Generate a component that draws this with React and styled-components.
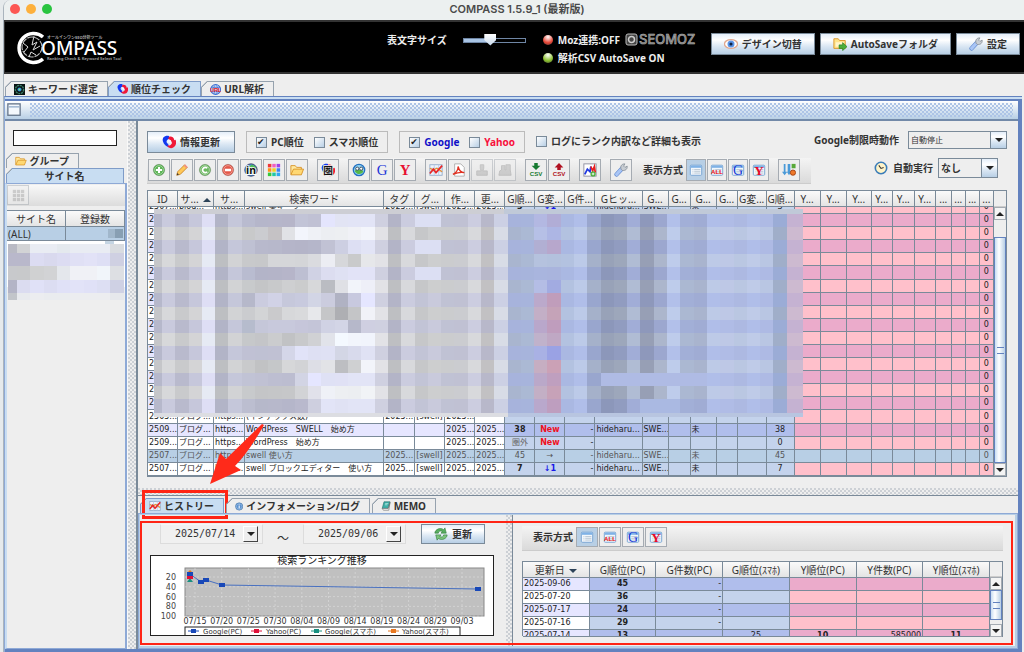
import { useState } from "react";
import styled, { createGlobalStyle, css } from "styled-components";

const GlobalStyle = createGlobalStyle`
  * {
    box-sizing: border-box;
  }

  body {
    margin: 0;
    background: #e6eaec;
    color: #333;
    font-family: "Noto Sans", "Noto Sans CJK JP", sans-serif;
    font-size: 10px;
    line-height: 14px;
    overflow: hidden;
  }

  button,
  input,
  select {
    font: inherit;
    color: inherit;
    margin: 0;
    border-radius: 0;
  }
`;

const line = "#7a8a99";
const blue = "#6382bf";
const metal = "linear-gradient(#e4eef9, #fff 30%, #dce8f4 60%, #b8cfe5)";

const dots = css`
  background-image: radial-gradient(circle at 1px 1px, #ccd0d5 1px, transparent 1px),
    radial-gradient(circle at 3px 3px, #ccd0d5 1px, transparent 1px);
  background-size: 4px 4px;
`;

const Window = styled.div`
  display: flex;
  flex-direction: column;
  min-height: 100vh;
  margin-left: 3px;
  border-left: 1px solid #aab4bd;
  border-top-left-radius: 8px;
  background: #eee;
  overflow: hidden;
`;

const TitleBar = styled.header`
  position: relative;
  display: flex;
  align-items: center;
  justify-content: center;
  height: 20px;
  padding: 0 0 2px 6px;
  background: #ecf0f0;
  font-family: Inter, "Noto Sans CJK JP", sans-serif;
  font-size: 11px;
  font-weight: 600;
  color: #4a4a4a;
`;

const Lights = styled.div`
  position: absolute;
  left: 6px;
  top: 4px;
  display: flex;
  gap: 6px;
`;

const Light = styled.span`
  width: 10px;
  height: 10px;
  border-radius: 50%;
  background: ${(p) => p.$color};
`;

const Banner = styled.div`
  display: flex;
  align-items: flex-start;
  height: 54px;
  padding: 9px 4px 0 10px;
  border: solid #333;
  border-width: 2px 0 2px 1px;
  background: #000;
  color: #eee;
  font-weight: 700;
`;

const SizeLabel = styled.label`
  display: flex;
  align-items: center;
  gap: 16px;
  margin-left: 265px;
  height: 18px;
`;

const Range = styled.input`
  appearance: none;
  width: 63px;
  height: 14px;
  background: none;

  &::-webkit-slider-runnable-track {
    height: 5px;
    border: 1px solid #6f86a5;
    background: linear-gradient(90deg, #a9c4e4 42%, #000 42%);
  }

  &::-webkit-slider-thumb {
    appearance: none;
    width: 12px;
    height: 12px;
    margin-top: -5px;
    background: linear-gradient(#fff, #c5d8ec);
    clip-path: polygon(0 0, 100% 0, 100% 55%, 50% 100%, 0 55%);
  }
`;

const Status = styled.div`
  display: grid;
  gap: 4px;
  margin-left: 17px;
  padding-top: 2px;
`;

const StatusLine = styled.div`
  display: flex;
  align-items: center;
  gap: 5px;
`;

const Lamp = styled.span`
  width: 10px;
  height: 10px;
  border-radius: 50%;
  background: radial-gradient(circle at 50% 20%, #fff, ${(p) => p.$color} 60%, #333 110%);
`;

const BannerButtons = styled.div`
  display: flex;
  gap: 5px;
  margin-left: auto;
  padding-top: 2px;
`;

const MetalButton = styled.button`
  display: flex;
  align-items: center;
  justify-content: center;
  gap: 4px;
  height: ${(p) => p.$height || 22}px;
  padding: 0 ${(p) => p.$pad || 14}px;
  border: 1px solid ${line};
  background: ${metal};
  color: #333;
  font-weight: 700;
  white-space: nowrap;
`;

const Tabs = styled.div`
  display: flex;
  align-items: flex-end;
  gap: ${(p) => p.$gap || 0}px;
  padding-left: ${(p) => p.$indent || 1}px;
  height: ${(p) => p.$height || 15}px;
`;

const TabSlot = styled.div`
  position: relative;
  display: flex;
`;

const Tab = styled.button`
  display: flex;
  align-items: center;
  justify-content: center;
  gap: 3px;
  width: ${(p) => (p.$width ? p.$width + "px" : "auto")};
  height: 15px;
  padding: 0 9px 0 8px;
  border: 1px solid ${(p) => (p.$active ? "#7f9cc8" : "#96a2ae")};
  border-bottom: 0;
  background: linear-gradient(
    135deg,
    #96a2ae 5px,
    ${(p) => (p.$active ? "#c8ddf2" : "#eee")} 5px
  );
  background-origin: border-box;
  clip-path: polygon(6px 0, 100% 0, 100% 100%, 0 100%, 0 6px);
  color: #333;
  font-weight: 700;
  white-space: nowrap;
`;

const Frame = styled.section`
  flex: 1;
  display: flex;
  flex-direction: column;
  margin-right: 2px;
  padding-top: 2px;
  border-top: 1px solid ${blue};
  border-left: 1px solid #8ea9d6;
  background: #c8ddf2;
`;

const Inner = styled.div`
  flex: 1;
  display: flex;
  flex-direction: column;
  border: solid ${blue};
  border-width: 2px 4px 3px 0;
  background: #eee;
`;

const InnerBar = styled.div`
  display: flex;
  align-items: center;
  gap: 9px;
  height: 20px;
  padding: 0 5px 0 2px;
  border-bottom: 2px solid #7289a8;
  background: linear-gradient(#fff, #b8cfe5);
`;

const InnerGrip = styled.div`
  flex: 1;
  height: 14px;
  background-image: radial-gradient(circle at 1px 1px, #adc4e6 1px, transparent 1px),
    radial-gradient(circle at 3px 3px, #adc4e6 1px, transparent 1px);
  background-size: 4px 4px;
`;

const Columns = styled.div`
  flex: 1;
  display: grid;
  grid-template-columns: 123px 8px minmax(0, 1fr);
`;

const Grip = styled.div`
  ${dots}
  background-color: #eee;
`;

const Sidebar = styled.aside`
  display: flex;
  flex-direction: column;
  border-right: 1px solid #f8f8f8;
`;

const Search = styled.input`
  height: 16px;
  margin: 9px 10px 7px 8px;
  padding: 0 3px;
  border: 1px solid #222;
  background: #fff;
`;

const SidePanel = styled.div`
  flex: 1;
  border: solid #8ea9d6;
  border-width: 1px 2px;
  border-left-color: #c8ddf2;
`;

const SideTools = styled.div`
  height: 21px;
  margin: 1px 0 4px;
  background: linear-gradient(#f8f8f8, #dcdcdc);
`;

const Main = styled.main`
  position: relative;
  display: flex;
  flex-direction: column;
  border-left: 2px solid ${line};
`;

const Upper = styled.div`
  flex: 1;
  display: flex;
  flex-direction: column;
  padding: 10px 11px 11px 9px;
`;

const Options = styled.div`
  display: flex;
  align-items: flex-start;
  height: 27px;
`;

const Group = styled.div`
  display: flex;
  align-items: center;
  gap: 10px;
  height: 22px;
  margin-left: ${(p) => p.$gap || 11}px;
  padding: 0 9px;
  border: 1px solid #bbb;
`;

const CheckLabel = styled.label`
  display: flex;
  align-items: center;
  gap: 4px;
  margin-left: ${(p) => p.$gap || 0}px;
  height: 20px;
  color: ${(p) => p.$color || "#333"};
  font-weight: 700;
  white-space: nowrap;
`;

const Check = styled.input`
  appearance: none;
  width: 11px;
  height: 11px;
  border: 1px solid ${line};
  background: linear-gradient(135deg, #fff, #b8cfe5);

  &:checked::after {
    content: "✔";
    display: block;
    font: 9px/9px "DejaVu Sans", sans-serif;
    color: #222;
  }
`;

const Field = styled.label`
  display: flex;
  align-items: center;
  gap: ${(p) => p.$gap || 5}px;
  margin-left: auto;
  margin-right: ${(p) => p.$right || 0}px;
  font-weight: 700;
  white-space: nowrap;
`;

const Combo = styled.span`
  display: grid;
  grid-template-columns: 1fr 16px;
  width: ${(p) => p.$width}px;
  height: ${(p) => p.$height}px;
  border: 1px solid ${line};
`;

const Select = styled.select`
  appearance: none;
  padding: 0 2px;
  border: 0;
  background: #eee;
  font-size: ${(p) => p.$size || 10}px;
  font-weight: ${(p) => p.$weight || 400};
`;

const Down = styled.span`
  display: grid;
  place-items: center;
  border-left: 1px solid ${line};
  background: ${metal};

  &::after {
    content: "";
    border: 4px solid transparent;
    border-top-color: #222;
    border-bottom: 0;
  }
`;

const ToolLine = styled.div`
  display: flex;
  align-items: flex-start;
  height: 32px;
`;

const Tools = styled.div`
  display: flex;
  align-items: center;
  height: 26px;
  padding: 0 11px 2px 1px;
  background: linear-gradient(#f4f4f4, #dadada);
  border-bottom: 1px solid #ccc;
`;

const ToolGroup = styled.div`
  display: flex;
  gap: 1px;
  margin-right: 9px;

  &:last-child {
    margin-right: 0;
  }
`;

const ToolButton = styled.button`
  display: grid;
  place-items: center;
  width: ${(p) => p.$width || 22}px;
  height: ${(p) => p.$height || 22}px;
  padding: 0;
  border: 1px solid #a5abb2;
  background: ${(p) => (p.$active ? "#b8cfe5" : "#eee")};
  opacity: ${(p) => (p.disabled ? 0.5 : 1)};
`;

const ToolText = styled.span`
  margin: 0 3px 0 2px;
  font-weight: 700;
  white-space: nowrap;
`;

const TableBox = styled.div`
  position: relative;
  flex: ${(p) => (p.$height ? "none" : 1)};
  height: ${(p) => (p.$height ? p.$height + "px" : "auto")};
  display: grid;
  grid-template-columns: minmax(0, 1fr) 13px;
  border: solid ${line};
  border-width: 1px 0 1px 1px;
`;

const Table = styled.table`
  width: 100%;
  height: 100%;
  table-layout: fixed;
  border-spacing: 0;
`;

const Th = styled.th`
  height: 16px;
  padding: 0;
  border-right: 1px solid ${line};
  border-bottom: 1px solid ${line};
  background: linear-gradient(#fafafa, #e4e4e4);
  font-weight: 400;
  line-height: 14px;
  white-space: nowrap;
  overflow: hidden;
`;

const Td = styled.td`
  height: ${(p) => (p.$cut ? 7 : 13)}px;
  padding: 0 1px;
  border-right: 1px solid ${line};
  border-bottom: 1px solid ${line};
  background: ${(p) => p.$bg};
  color: ${(p) => p.$color || "#222"};
  font-family: "DejaVu Sans", "Noto Sans CJK JP", sans-serif;
  font-size: 8px;
  font-weight: ${(p) => (p.$bold ? 700 : 400)};
  line-height: 12px;
  text-align: ${(p) => p.$align || "left"};
  white-space: nowrap;
  overflow: hidden;
`;

// keeps a half scrolled row at its visible height
const Cut = styled.div`
  display: flex;
  flex-direction: column;
  justify-content: ${(p) => (p.$top ? "flex-start" : "flex-end")};
  height: 6px;
  overflow: hidden;
`;

const Scroll = styled.div`
  display: grid;
  grid-template-rows: ${(p) => p.$rows};
  border-right: 1px solid ${line};
  background: #eee;
`;

const ScrollHead = styled.div`
  border-bottom: 1px solid #ccc;
`;

const ScrollButton = styled.button`
  display: grid;
  place-items: center;
  padding: 0;
  border: 1px solid #a5abb2;
  background: #f4f4f4;

  &::after {
    content: "";
    border: 4px solid transparent;
    ${(p) =>
      p.$up
        ? "border-bottom-color: #222; border-top: 0;"
        : "border-top-color: #222; border-bottom: 0;"}
  }
`;

const Thumb = styled.div`
  display: grid;
  place-items: center;
  border: 1px solid ${blue};
  background: linear-gradient(90deg, #c8ddf2, #fff 40%, #b8cfe5);

  &::after {
    content: "";
    width: 7px;
    height: 5px;
    border: solid ${blue};
    border-width: 1px 0;
  }
`;

const Mosaic = styled.svg`
  position: absolute;
  left: 6px;
  top: 18px;
  width: 75.5%;
  height: 208px;
`;

const SideMosaic = styled.svg`
  display: block;
  width: 100%;
  height: 59px;
`;

const Splitter = styled.div`
  ${dots}
  height: 8px;
  border-bottom: 1px solid ${line};
`;

const Lower = styled.div`
  position: relative;
  display: flex;
  flex-direction: column;
  height: 153px;
`;

const LowerPanel = styled.div`
  position: relative;
  flex: 1;
  display: grid;
  grid-template-columns: 366px 6px minmax(0, 1fr);
  border: solid #b8cfe5;
  border-width: 2px 3px 3px 2px;
  outline: 1px solid #8ea9d6;
  outline-offset: -1px;
`;

const Mark = styled.div`
  position: absolute;
  inset: ${(p) => p.$inset};
  border: ${(p) => p.$width}px solid #ff2415;
  pointer-events: none;
`;

const Arrow = styled.svg`
  position: absolute;
  left: 71px;
  bottom: 162px;
  width: 60px;
  height: 64px;
  pointer-events: none;
`;

const History = styled.div`
  padding: 9px 8px 0 10px;
`;

const Dates = styled.div`
  display: flex;
  align-items: center;
  height: 20px;
  margin: 0 0 11px 10px;
`;

const DateCombo = styled.span`
  display: grid;
  grid-template-columns: 1fr 15px;
  width: 103px;
  height: 20px;
  padding: 1px 4px 1px 14px;
  border: 1px solid #dcdcdc;
  border-top-color: #f6f6f6;
  background: #f0f0f0;
`;

const DateSelect = styled.select`
  appearance: none;
  padding: 0;
  border: 0;
  background: none;
  font-family: "DejaVu Sans Mono", monospace;
`;

const DateDown = styled(Down)`
  border: 1px solid #fff;
  border-right-color: #444;
  border-bottom-color: #444;
  background: #eee;
`;

const Tilde = styled.span`
  width: 40px;
  padding-top: 10px;
  text-align: center;
  font-size: 12px;
`;

const Chart = styled.svg`
  display: block;
  width: 344px;
  max-width: 100%;
  height: 81px;
  border: 1px solid #222;
  background: #fff;
  font-family: "DejaVu Sans", "Noto Sans CJK JP", sans-serif;
`;

const Results = styled.div`
  padding: 11px 12px 0 9px;
  border-left: 1px solid ${line};
`;

const ResultTools = styled(Tools)`
  height: 25px;
  margin-bottom: 10px;
  padding-left: 9px;
`;

// ---- icons ----

const Svg = ({ size = 14, children }) => (
  <svg width={size} height={size} viewBox="0 0 16 16" aria-hidden="true">
    {children}
  </svg>
);

const Swirl = () => (
  <>
    <path d="M8 1C3 0 0 3 1 7c1 4 4 6 7 7l-1-4C5 9 4 6 8 4.500z" fill="#1238f0" />
    <path d="M8 2c3-1 6 1 6 4l1.500-.5c2 5-1 9.500-5 9.500-2 0-4-1-4.500-3 3 .5 5-1 5-3 0-2.500-2-4-4-4.500z" fill="#f01838" />
    <path d="M6.500 5l3.500 1 1.500 4-4-1.500z" fill="#f4f4ff" />
  </>
);

const Ball = ({ color, children }) => (
  <>
    <circle cx="8" cy="8" r="6.500" fill={color} stroke="#0003" />
    <circle cx="8" cy="8" r="5" fill="none" stroke="#fff8" strokeWidth=".8" />
    {children}
  </>
);

const Folder = () => (
  <>
    <path d="M1 13V3h5l1.500 2H13v2" fill="#ffe9a0" stroke="#d89020" />
    <path d="M1 13.500L4 7h11.500L13 13.500z" fill="#ffd873" stroke="#d89020" />
  </>
);

const Sheet = () => (
  <>
    <rect x="1.500" y="2.500" width="13" height="11.500" rx="1" fill="#f2f7fc" stroke="#6f9fd0" />
    <rect x="2" y="3" width="12" height="2.500" fill="#7fb2e6" />
    <path d="M4 7.500h1M4 9.500h1M4 11.500h1M6 7.500h7M6 9.500h7M6 11.500h7" stroke="#a4b4c4" strokeWidth=".8" />
  </>
);

const Letter = ({ x = 8, y = 13, size = 13, weight = 700, color, children, family = "Liberation Serif" }) => (
  <text x={x} y={y} fontSize={size} fontWeight={weight} fill={color} textAnchor="middle" fontFamily={family}>
    {children}
  </text>
);

const icons = {
  swirl: <Swirl />,
  target: (
    <>
      <rect width="16" height="16" fill="#0a1414" />
      <circle cx="8" cy="8" r="6" fill="none" stroke="#3b8068" strokeWidth="2" strokeDasharray="3 1" />
      <circle cx="8" cy="8" r="3" fill="#2a8ad0" />
      <circle cx="8" cy="8" r="1.500" fill="#7fe090" />
    </>
  ),
  url: (
    <>
      <circle cx="8" cy="8" r="7" fill="#c5d8f6" stroke="#3d6fd0" strokeWidth="1.500" />
      <path d="M2 5h12M2 11h12M8 1c-4 4-4 10 0 14 4-4 4-10 0-14" fill="none" stroke="#3d6fd0" />
      <Letter y={11} size={8} color="#f01818" family="Liberation Sans">URL</Letter>
    </>
  ),
  frame: (
    <>
      <rect x="1" y="1" width="14" height="13" fill="#f4f8fc" stroke="#65758a" strokeWidth="1.500" />
      <path d="M2 4.500h12" stroke="#8ea9c8" strokeWidth="1.500" />
    </>
  ),
  eye: (
    <>
      <ellipse cx="8" cy="8" rx="7.500" ry="5" fill="#fff" stroke="#e0a890" strokeWidth="1.500" />
      <circle cx="8" cy="8" r="4" fill="#5a94e8" />
      <circle cx="8" cy="8" r="1.800" fill="#102040" />
    </>
  ),
  folder: <Folder />,
  folderGo: (
    <>
      <path d="M1 13V2h5l1.500 2H14v9z" fill="#ffe48c" stroke="#d89020" />
      <path d="M3 6h9v5H3z" fill="#fff5cc" />
      <path d="M7 9h4V6.500l5 4.500-5 4.500V13H7z" fill="#4cae3c" stroke="#26801e" strokeWidth=".8" />
    </>
  ),
  wrench: (
    <>
      <path d="M3 13L9 6.500" stroke="#5a84cc" strokeWidth="5" strokeLinecap="round" />
      <path d="M3 13L9 6.500" stroke="#a9c5f5" strokeWidth="3.600" strokeLinecap="round" />
      <path d="M8 7C7 3 9 1 12.500 1L11 3.500 12.500 5 15 3.500C15.500 7 13 9 9.500 8.500z" fill="#c9ced4" stroke="#8a929c" />
    </>
  ),
  add: (
    <Ball color="#5cb454">
      <path d="M8 4.500v7M4.500 8h7" stroke="#fff" strokeWidth="2.400" />
    </Ball>
  ),
  pencil: (
    <>
      <path d="M2 14l1-4 8-8 3 3-8 8z" fill="#ffc858" stroke="#c8862c" />
      <path d="M10 3l3 3 1.500-1.500-3-3z" fill="#f09080" />
      <path d="M2 14l.8-2.500 1.700 1.700z" fill="#333" />
    </>
  ),
  copy: (
    <Ball color="#6cb860">
      <path d="M10.500 6a3 3 0 1 0 0 4" fill="none" stroke="#fff" strokeWidth="2" />
    </Ball>
  ),
  remove: (
    <Ball color="#e45848">
      <path d="M4.500 8h7" stroke="#fff" strokeWidth="2.600" />
    </Ball>
  ),
  index: (
    <>
      <circle cx="8" cy="8" r="7" fill="#4aa4e8" stroke="#225" />
      <path d="M2 5c3-3 5 0 6-3 4 0 6 3 6 5-3 0-4 4-6 7-3-1-2-5-6-9" fill="#4dbb56" />
      <text x="8" y="12" fontSize="12" fontWeight="700" textAnchor="middle" fontFamily="Noto Sans" fill="#111" stroke="#fff" strokeWidth="2" paintOrder="stroke">in</text>
    </>
  ),
  palette: (
    <>
      {["#f03838", "#f060c0", "#a040e8", "#ff9018", "#f0d020", "#4080f0", "#38c838", "#20c8a8", "#30a8f0"].map((c, i) => (
        <rect key={c} x={1 + (i % 3) * 5} y={1 + Math.floor(i / 3) * 5} width="4" height="4" fill={c} />
      ))}
    </>
  ),
  out: (
    <>
      <Swirl />
      <text x="8" y="12" fontSize="11" fontWeight="700" textAnchor="middle" fontFamily="Noto Sans CJK JP" fill="#111" stroke="#eee" strokeWidth="2" paintOrder="stroke">圏</text>
    </>
  ),
  globe: (
    <>
      <circle cx="8" cy="8" r="6.500" fill="#8ed0f0" stroke="#2470c0" strokeWidth="1.500" />
      <path d="M3 9c2 4 7 5 10 1l-2-3-3 1-2-2z" fill="#58b848" />
      <circle cx="6" cy="6.500" r="1.800" fill="#fff" stroke="#345" />
      <circle cx="10.500" cy="6.500" r="1.800" fill="#fff" stroke="#345" />
    </>
  ),
  g: <Letter y={14} size={17} weight={400} color="#1c34d8">G</Letter>,
  y: <Letter y={14} size={17} color="#e81030">Y</Letter>,
  chart: (
    <>
      <rect x="1" y="2" width="14" height="12" fill="#eef4fc" stroke="#8ea9c8" />
      <path d="M1 6h14M1 10h14M6 2v12M11 2v12" stroke="#b8cce4" />
      <path d="M1 6l4 2 4-2 6 4" fill="none" stroke="#e89030" strokeWidth="1.500" />
      <path d="M1 12l4-5 3 4 7-8" fill="none" stroke="#e82828" strokeWidth="2" />
    </>
  ),
  pdf: (
    <>
      <path d="M3 1h7l4 4v10H3z" fill="#fff" stroke="#aaa" />
      <path d="M1 13c4-2 6-5 6-9 1 4 3 7 7 7-5-1-8 0-13 2" fill="none" stroke="#e03020" strokeWidth="1.500" />
    </>
  ),
  stamp: <path d="M6 2h4v4l-1 3h5v5H2V9h5L6 6z" fill="#b4b4b4" stroke="#999" />,
  users: <path d="M4 3h4v5h1V2h5v6l1 6H1l1-5 2-1z" fill="#b4b4b4" stroke="#999" />,
  csvIn: (
    <>
      <path d="M6 0h4v3h3L8 8 3 3h3z" fill="#167a30" />
      <Letter y={15} size={7} color="#167a30" family="Liberation Sans">CSV</Letter>
    </>
  ),
  csvOut: (
    <>
      <path d="M6 8h4V5h3L8 0 3 5h3z" fill="#b01020" />
      <Letter y={15} size={7} color="#b01020" family="Liberation Sans">CSV</Letter>
    </>
  ),
  graph: (
    <>
      <rect x="1" y="1" width="14" height="14" fill="#fff" stroke="#889" />
      <path d="M2 13L5 7l3 3 1-6" fill="none" stroke="#2038e0" strokeWidth="2" />
      <path d="M9 4l2 5 2-5 1 7" fill="none" stroke="#e82020" strokeWidth="2" />
      <circle cx="11.500" cy="12.500" r="3" fill="#4cae3c" />
      <path d="M11.500 11v3M10 12.500h3" stroke="#fff" />
    </>
  ),
  sheet: <Sheet />,
  all: (
    <>
      <Sheet />
      <Letter y={13} size={7} color="#f00808" family="Liberation Sans">ALL</Letter>
    </>
  ),
  gSheet: (
    <>
      <Sheet />
      <Letter y={14} size={16} weight={400} color="#1a38d8">G</Letter>
    </>
  ),
  ySheet: (
    <>
      <Sheet />
      <Letter y={14} size={15} color="#e80828">Y</Letter>
    </>
  ),
  sort: (
    <>
      <path d="M2 1v9H0l3 4 3-4H4V1M6.500 1v9h-1l2.500 4 2.500-4h-1V1z" fill="#4a9ad8" />
      <rect x="11" y="1" width="4.500" height="5" fill="#58a838" />
      <circle cx="12.500" cy="11" r="3" fill="#f07828" stroke="#a04010" />
    </>
  ),
  clock: (
    <>
      <circle cx="8" cy="8" r="6.500" fill="#fff4c8" stroke="#3a7cb8" strokeWidth="1.800" />
      <path d="M5.500 5L8 8.500l3-1" fill="none" stroke="#333" strokeWidth="1.200" />
    </>
  ),
  grid: (
    <>
      {[0, 1, 2, 3, 4, 5, 6, 7, 8].map((i) => (
        <rect key={i} x={1 + (i % 3) * 5} y={1 + Math.floor(i / 3) * 5} width="4" height="4" fill="#aaa" />
      ))}
    </>
  ),
  info: (
    <>
      <circle cx="8" cy="8" r="7" fill="#5b92d0" stroke="#3a689c" />
      <circle cx="8" cy="8" r="5.500" fill="none" stroke="#b5d2f0" />
      <path d="M8 7v5M8 4v2" stroke="#fff" strokeWidth="2" />
    </>
  ),
  memo: (
    <>
      <path d="M5 1h10l-3 11H2z" fill="#3fb0a8" stroke="#23706c" />
      <path d="M2 12l2 3h9l2-13-3 10z" fill="#f4f4f4" stroke="#666" />
      <path d="M7 4h5M6.500 6h4" stroke="#d6f4f0" />
    </>
  ),
  refresh: (
    <>
      <path d="M1 7c0-4 6-7 10-4l1.500-2L14 7H8l1.500-2C7 4 5 5 5 7z" fill="#58ae60" stroke="#2f7c3c" strokeWidth=".7" />
      <path d="M15 9c0 4-6 7-10 4l-1.500 2L2 9h6l-1.500 2c2.500 1 4.500 0 4.500-2z" fill="#7cc47c" stroke="#2f7c3c" strokeWidth=".7" />
    </>
  ),
};

const Icon = ({ name, size }) => <Svg size={size}>{icons[name]}</Svg>;

const Logo = () => (
  <svg width="107" height="40" viewBox="0 0 107 40" fontFamily="Noto Sans, Noto Sans CJK JP, sans-serif">
    <path d="M28 6A14.500 14.500 0 1 0 28 28" fill="none" stroke="#fff" strokeWidth="3.500" />
    <circle cx="17" cy="16" r="10" fill="none" stroke="#bbb" strokeWidth="1.200" strokeDasharray="6 1" />
    <path d="M19 5l-2 9 5-3-4 8 7-4M8 12l5 4-4 5M14 26l2-5 5 3" fill="none" stroke="#ddd" strokeWidth="1" />
    <text x="26" y="24" fontSize="19" fontWeight="500" fill="#fff">OMPASS</text>
    <text x="32" y="8" fontSize="4" fill="#aaa">オールインワンSEO分析ツール</text>
    <text x="32" y="29" fontSize="4" fill="#999">Ranking Check &amp; Keyword Select Tool</text>
  </svg>
);

const MozLogo = () => (
  <svg width="72" height="14" viewBox="0 0 72 14" aria-label="SEOMOZ">
    <rect x="1" y="1" width="11" height="11" rx="2" fill="#444" stroke="#bbb" />
    <circle cx="6.500" cy="6.500" r="3" fill="none" stroke="#ccc" strokeWidth="1.500" />
    <text x="14" y="11" fontFamily="Inter, sans-serif" fontSize="13" fontWeight="500" fill="#777" stroke="#bbb" strokeWidth=".5">
      SEOMOZ
    </text>
  </svg>
);

// ---- data ----

const columns = [
  ["ID", 30], ["サ...", 36], ["サ...", 31], ["検索ワード", 139], ["タグ", 31], ["グ...", 30],
  ["作...", 30], ["更...", 30], ["G順...", 30], ["G変...", 30], ["G件...", 30], ["Gヒッ...", 47],
  ["G...", 26], ["G...", 22], ["G...", 26], ["G...", 21], ["G変...", 29], ["G順...", 28],
  ["Y...", 26], ["Y...", 26], ["Y...", 25], ["Y...", 21], ["Y...", 22], ["Y...", 21],
  ["...", 16], ["...", 14], ["...", 14], ["...", 14],
];

const pad = (cells) => [...cells, ...Array(27 - cells.length).fill(""), "0"];

const rows = [
  pad(["2507...", "blog...", "https...", "swell 集キーフ", "2025...", "[swell]", "2025...", "2025...", "3", "↓1", "-", "hideharu...", "SWE...", "", "未", "", "", "3"]),
  ...Array.from({ length: 15 }, () => pad(["2"])),
  pad(["2505...", "ブログ...", "https...", "(インデックス数)", "2025...", "[swell]", "2025..."]),
  pad(["2509...", "ブログ...", "https...", "WordPress　SWELL　始め方", "", "", "2025...", "2025...", "38", "New", "-", "hideharu...", "SWE...", "", "未", "", "", "38"]),
  pad(["2509...", "ブログ...", "https...", "WordPress　始め方", "", "", "2025...", "2025...", "圏外", "New", "-", "", "", "", "", "", "", "0"]),
  pad(["2507...", "ブログ...", "https...", "swell 使い方", "2025...", "[swell]", "2025...", "2025...", "45", "→", "-", "hideharu...", "SWE...", "", "未", "", "", "45"]),
  pad(["2507...", "ブログ...", "https...", "swell ブロックエディター　使い方", "2025...", "[swell]", "2025...", "2025...", "7", "↓1", "-", "hideharu...", "SWE...", "", "未", "", "", "7"]),
];

const SELECTED = 19;

const results = [
  ["2025-09-06", "45", "-", "", "", "", ""],
  ["2025-07-20", "36", "-", "", "", "", ""],
  ["2025-07-17", "24", "-", "", "", "", ""],
  ["2025-07-16", "29", "-", "", "", "", ""],
  ["2025-07-14", "13", "", "25", "10", "585000", "11"],
];

const tint = (kind, dark) =>
  ({
    w: dark ? "#e6e6ff" : "#fff",
    g: dark ? "#b0beec" : "#c4d3ec",
    y: dark ? "#ebabcb" : "#ffc0cb",
  })[kind];

// pixelated area, colours per column for lilac and for grey rows
const darkCols =
  "b6b8cb c9cadd b9bacd c6c7db dedef5 b2b4c7 c5c7da b8bbcf b5b6ca b6b7cb b6b5c9 c2c4d7 c0c1d4 e4e5fd e2e4f4 e2e4f6 e2e3f6 cfd0e0 b3b4c7 cbccdf c2c4d6 c9cadc c0c2d4 c0c1d3 cccde0 b8b8ca ccd0e4 a7b3dc a7b4dc b3b8e2 b1add6 aab8e2 b0bee9 99a6ce 8c97ba 919cc0 a1add7 8e98bb 9ca7cf b2c0ea a2afd7 a0acd4 b0bee9 b0bce6 adb9e2 b0bee9 aebae4 9bacd6 c5b2d2".split(" ");
const lightCols =
  "c5c6c9 d7d8da c9cacc d4d4d6 e6eaf4 bdbfc2 d2d3d5 c6c8c9 c6c6c8 c8c8ca d6d7d9 d5d6d9 dadbdf e2e3e7 d6d7da e6e7ea f1f2f8 e2e2e6 bebfc2 d8d9dc c6c7c9 cdcecf cbccce cbccd0 d8d9dc c2c1c3 d8dce6 a9b5cf abb9d4 b6bfe4 adb6e4 b3c2e0 bccae8 a5b1ca 98a2b8 9da7bb b0bcd4 979fb5 acb6cc becceb abb8d2 a9b4ce bdcae7 bec8e6 bac7e2 bfcbe8 b9c6e3 a0aec9 cdbad0".split(" ");

const wordCols = [
  "b9bbcf b5b6ca b6b6ca b6b5c9 c2c4d7 c0c1d4 e4e5fd e2e4f4 e2e4f6 e2e4f6",
  "c8c9ca cbccd0 c5c2c5 e1e2e6 f3f5fc eff1f6 eceef2 edeff2 f0f1f6 f3f5fb",
  "bfc1d3 b8b9cc b7b8cb b5b5c9 b4b4c8 b5b6ca c1c2d4 cdcfe2 dddff3 e2e4f6",
  "c8c9cb c7c8ca d5d6d9 d5d6d9 d4d5d8 dadbdf ecedf3 d6d7da c9cacb e6e7ea",
  "b9bcd0 b3b4c8 b4b4c8 b6b5c9 bdbfd2 d0d2e4 dcddf0 dfe1f3 e2e3f7 e2e3f7",
  "c8cacc c4c5c7 c8c9cb cecfd1 cbcccd d7d8da babcc2 dfe0e5 f2f4fa eeeff8",
  "b6b8ca cbccdf d1d2e6 c6c8db c8cade d2d5e5 cbccde b0b2c3 c8c9df e5e6ff",
  "cbcccf d3d4d6 cacacc d7d8da d9dadc e7e8eb c5c6c8 aeafb3 c4c5c7 f1f2f8",
  "b6bccd c5c7d9 c8c9dc c8c9dc c6c6da c4c5d8 d0d2e4 d3d5e6 b6b8ca cfcfe1",
  "c6c8ca c4c5c8 cbccce c1c2c4 c8c9cb d0d1d4 e1e3ea f4f9ff f2f5fc f1f4fc",
  "c0c1d4 bfc1d3 c0c1d3 d4d6e8 e1e3f8 dee0f3 dfe1f4 d3d6e5 d8daec e0e2f4",
  "c9cacc c1c2c4 c5c7c9 d6d7d9 d2d3d6 dddee6 e2e3e7 bdbec2 cfd0d2 f2f4fa",
  "c1c3d5 c0c1d3 bdbed1 bcbdd0 d2d4e4 e5e6ff dfe1f5 e0e1f5 e2e4f6 e2e4f6",
  "c8cacc c4c5c7 c5c6c8 c6c7c9 d2d3d6 e1e1ea eff1f7 edeff2 eceef1 f1f3f6",
  "bcbed0 b6b8ca b7b8cb b5b6ca b9b9cd cecfdf e2e4f7 e0e2f4 e2e4f6 e2e4f6",
].map((r) => r.split(" "));

const changeCols =
  "b3b8e2 b1add6 b6c0e6 adb6e4 b1afd3 b7a7cc b5c2de b3c1dd a9b5de a9b4dd b4bde5 a2abe1 bba9cb c09dbb c3afc6 c5a3b8 b9a7cb bf9dbd c0b2cb bfa8c4 a9b1e4 9aa2e4 c6aec2 cba1b6 baa8c9 bf9fbf c3afc5 c7a2b8 b9a8cc be9ebf".split(" ");

const cellColor = (r, c) => {
  if (c >= 7 && c <= 16) return wordCols[r][c - 7];
  if (c === 29 || c === 30) return changeCols[r * 2 + c - 29];
  if ((c === 20 || c === 21) && r < 5 && r % 2 === 0) return "dcdff3";
  if (r === 12 && c > 33 && c < 42) return "afbbe4";
  if (r === 14 && c > 36 && c < 40) return "aab9e2";
  return (r % 2 ? lightCols : darkCols)[c];
};

const edges = [0, ...Array.from({ length: 48 }, (_, i) => 8 + i * 13.28), 648];

const TableMosaic = () => (
  <Mosaic viewBox="0 0 648 209" preserveAspectRatio="none" shapeRendering="crispEdges">
    {wordCols.map((_, r) =>
      darkCols.map((_, c) => (
        <rect
          key={`${r}-${c}`}
          x={edges[c]}
          y={5 + r * 13.3}
          width={edges[c + 1] - edges[c] + 0.5}
          height="14"
          fill={"#" + cellColor(r, c)}
        />
      ))
    )}
    <rect width="350" height="5" fill="#cdced4" />
    <rect x="350" width="298" height="5" fill="#c0c9d8" />
    {darkCols.map((_, c) => (
      <rect key={c} x={edges[c]} y="204.500" width={edges[c + 1] - edges[c] + 0.5} height="4.500" fill={c < 27 ? "#dcdde2" : "#b8c5e0"} />
    ))}
  </Mosaic>
);

const sideRows = [
  "b9bac4 d2d3d5 e9ecf3 e9ecf3 e4e9ee e9ecf3 e9ecf3 e9ecf3 d9dce0",
  "b9b8cb b9b8cb dcdcf2 d9d9ee dcdcf2 e0e0f5 e2e2f7 dedff5 cfd0e2",
  "c8c9cc c8c9cb d0d1d2 d2d3d5 e4e7ec f0f1f6 f0f1f6 f1f5fa dddfe3",
  "b3b4c6 dbdcf0 e0e1f7 dcddf2 e0e1f7 e2e3f8 e0e1f7 dddff3 cfd1e4",
  "c2c5ca e8eaee ecedf0 eaecef eaecef ecedf0 ecedf0 ecedf0 e6e8ec",
].map((r) => r.split(" "));

const SiteMosaic = () => (
  <SideMosaic viewBox="0 0 118 59" preserveAspectRatio="none" shapeRendering="crispEdges">
    <rect width="118" height="46" fill="#fff" />
    <rect x="98" width="9" height="5" fill="#c5d5e3" />
    {sideRows.map((row, r) =>
      row.map((c, i) => (
        <rect
          key={`${r}-${i}`}
          x={i ? 10 + (i - 1) * 13.3 : 1}
          y={r ? 12 + (r - 1) * 13.3 : 3}
          width="13.800"
          height={r === 4 ? 7 : 13.6}
          fill={"#" + c}
        />
      ))
    )}
  </SideMosaic>
);

const kindOf = (c) => (c < 8 ? "w" : c < 18 ? "g" : "y");
const aligns = { 8: "center", 9: "center", 10: "right", 17: "center", 27: "center" };
const cellText = { New: "#f01020", "↓1": "#1818e8", "圏外": "#666" };

const Triangle = styled.span`
  display: inline-block;
  margin-left: 4px;
  vertical-align: middle;
  border: 4px solid transparent;
  ${(p) =>
    p.$up
      ? "border-bottom-color: #2c4258; border-top: 0;"
      : "border-top-color: #2c4258; border-bottom: 0;"}
`;

const SortHead = ({ label, up }) => (
  <>
    {label}
    <Triangle $up={up} />
  </>
);

const RankTable = () => (
  <TableBox>
    <Table>
      <colgroup>
        {columns.map(([, w], i) => (
          <col key={i} style={{ width: w }} />
        ))}
      </colgroup>
      <thead>
        <tr>
          {columns.map(([name], i) => (
            <Th key={i}>{i === 1 ? <SortHead label={name} up /> : name}</Th>
          ))}
        </tr>
      </thead>
      <tbody>
        {rows.map((row, r) => (
          <tr key={r}>
            {row.map((text, c) => (
              <Td
                key={c}
                $cut={r === 0}
                $bg={r === SELECTED ? "#b8cfe5" : tint(kindOf(c), r % 2 === 1)}
                $color={cellText[text] || (r === SELECTED ? "#555" : undefined)}
                $bold={r !== SELECTED && (c === 9 || (c === 8 && text !== "圏外"))}
                $align={aligns[c]}
              >
                {r === 0 ? <Cut>{text}</Cut> : text}
              </Td>
            ))}
          </tr>
        ))}
      </tbody>
    </Table>
    <Scroll $rows="16px 13px 17px 1fr 13px">
      <ScrollHead />
      <ScrollButton $up aria-label="上へ" />
      <span />
      <Thumb />
      <ScrollButton aria-label="下へ" />
    </Scroll>
    <TableMosaic />
  </TableBox>
);

const ResultTable = () => (
  <TableBox $height={75}>
    <Table>
      <thead>
        <tr>
          <Th><SortHead label="更新日" /></Th>
          <Th>G順位(PC)</Th>
          <Th>G件数(PC)</Th>
          <Th>G順位(ｽﾏﾎ)</Th>
          <Th>Y順位(PC)</Th>
          <Th>Y件数(PC)</Th>
          <Th>Y順位(ｽﾏﾎ)</Th>
        </tr>
      </thead>
      <tbody>
        {results.map((row, r) => (
          <tr key={r}>
            {row.map((text, c) => (
              <Td
                key={c}
                $cut={r === 4}
                $bg={tint(c < 1 ? "w" : c < 4 ? "g" : "y", r % 2 === 0)}
                $bold={c === 1 || c === 4 || c === 6}
                $align={c === 0 ? "left" : c === 2 || c === 5 ? "right" : "center"}
              >
                {r === 4 ? <Cut $top>{text}</Cut> : text}
              </Td>
            ))}
          </tr>
        ))}
      </tbody>
    </Table>
    <Scroll $rows="15px 13px 1fr 4px 13px">
      <ScrollHead />
      <ScrollButton $up aria-label="上へ" />
      <Thumb />
      <span />
      <ScrollButton aria-label="下へ" />
    </Scroll>
  </TableBox>
);

const chartDays = ["07/15", "07/20", "07/25", "07/30", "08/04", "08/09", "08/14", "08/19", "08/24", "08/29", "09/03"];
const chartPoints = [[39, 18], [50, 26], [55, 24], [71, 29], [327, 33]];
const legend = [
  ["Google(PC)", "#1848b8", 38, 52],
  ["Yahoo(PC)", "#e01038", 101, 115],
  ["Google(スマホ)", "#189080", 161, 174],
  ["Yahoo(スマホ)", "#e87820", 238, 251],
];

const RankChart = () => (
  <Chart viewBox="0 0 342 79">
    <text x="171" y="8" fontSize="10" textAnchor="middle" fill="#222">検索ランキング推移</text>
    <rect x="34" y="12" width="299" height="48" fill="#c0c0c0" stroke="#888" />
    {[20, 40, 60, 80, 100].map((n, i) => (
      <g key={n}>
        <path d={`M34 ${21 + i * 9.8}H333`} stroke="#ddd" strokeWidth=".6" strokeDasharray="2 2" />
        <text x="25" y={24 + i * 9.8} fontSize="8" textAnchor="end" fill="#444">{n}</text>
      </g>
    ))}
    {chartDays.map((d, i) => (
      <g key={d}>
        <path d={`M${44 + i * 26.7} 12V60`} stroke="#ddd" strokeWidth=".6" strokeDasharray="2 2" />
        <text x={44 + i * 26.7} y="68" fontSize="8" textAnchor="middle" fill="#333">{d}</text>
      </g>
    ))}
    <polyline points={chartPoints.join(" ")} fill="none" stroke="#4870c0" />
    <path d="M39 14l2 2-2 2-2-2z" fill="#e87820" />
    <path d="M39 22l3 4h-6z" fill="#189080" />
    <rect x="36" y="19" width="6" height="4" fill="#e01038" />
    {chartPoints.map(([x, y]) => (
      <rect key={x} x={x - 3} y={y - 2} width="6" height="4" fill="#1848b8" />
    ))}
    <rect x="34" y="71" width="275" height="10" fill="#fff" stroke="#222" />
    {legend.map(([name, color, x, tx]) => (
      <g key={name}>
        <path d={`M${x - 1} 75h11`} stroke={color} />
        <rect x={x + 2} y="73" width="5" height="4" fill={color} />
        <text x={tx} y="77.500" fontSize="7" fill="#333">{name}</text>
      </g>
    ))}
  </Chart>
);

const DatePick = ({ value, label }) => (
  <DateCombo>
    <DateSelect aria-label={label}>
      <option>{value}</option>
    </DateSelect>
    <DateDown />
  </DateCombo>
);

const RefreshSlot = styled.div`
  margin-left: 15px;
`;

const SiteTd = styled.td`
  height: 14px;
  padding: 0 1px;
  border-right: 1px solid ${line};
  border-bottom: 1px solid ${line};
  background: #b8cfe5;
  line-height: 12px;
`;

const CountBlur = styled.span`
  display: block;
  width: 15px;
  height: 9px;
  margin-left: auto;
  background: linear-gradient(90deg, #a1b7cb 50%, #889fb3 50%);
`;

const SiteBox = styled.div`
  border-top: 1px solid ${line};
`;

const SiteTable = () => (
  <SiteBox>
    <Table>
      <thead>
        <tr>
          <Th>サイト名</Th>
          <Th>登録数</Th>
        </tr>
      </thead>
      <tbody>
        <tr>
          <SiteTd>(ALL)</SiteTd>
          <SiteTd><CountBlur /></SiteTd>
        </tr>
      </tbody>
    </Table>
    <SiteMosaic />
  </SiteBox>
);

const toolGroups = [
  ["add", "pencil", "copy", "remove", "index", "palette", "folder"],
  ["out"],
  ["globe", "g", "y"],
  ["chart", "pdf", "stamp", "users"],
  ["csvIn", "csvOut"],
  ["graph"],
  ["wrench"],
];

const views = ["sheet", "all", "gSheet", "ySheet"];

const App = () => {
  const [view, setView] = useState("sheet");
  const [resultView, setResultView] = useState("sheet");

  return (
    <>
      <GlobalStyle />
      <Window>
        <TitleBar>
          <Lights>
            <Light $color="#fc5753" />
            <Light $color="#fdb03c" />
            <Light $color="#29c440" />
          </Lights>
          COMPASS 1.5.9_1 (最新版)
        </TitleBar>
        <Banner>
          <Logo />
          <SizeLabel>
            表文字サイズ
            <Range type="range" defaultValue="42" />
          </SizeLabel>
          <Status>
            <StatusLine><Lamp $color="#e84838" />Moz連携:OFF <MozLogo /></StatusLine>
            <StatusLine><Lamp $color="#8cc030" />解析CSV AutoSave ON</StatusLine>
          </Status>
          <BannerButtons>
            <MetalButton $pad={12}><Icon name="eye" />デザイン切替</MetalButton>
            <MetalButton $pad={12}><Icon name="folderGo" />AutoSaveフォルダ</MetalButton>
            <MetalButton $pad={12}><Icon name="wrench" />設定</MetalButton>
          </BannerButtons>
        </Banner>
        <Tabs $height={22}>
          <Tab $width={103}><Icon name="target" size={13} />キーワード選定</Tab>
          <Tab $width={93} $active><Icon name="swirl" />順位チェック</Tab>
          <Tab $width={73}><Icon name="url" size={13} />URL解析</Tab>
        </Tabs>
        <Frame>
          <Inner>
            <InnerBar>
              <Icon name="frame" />
              <InnerGrip />
            </InnerBar>
            <Columns>
              <Sidebar>
                <Search aria-label="サイト検索" />
                <Tabs><Tab $width={73}><Icon name="folder" />グループ</Tab></Tabs>
                <Tabs><Tab $width={118} $active>サイト名</Tab></Tabs>
                <SidePanel>
                  <SideTools>
                    <ToolButton $height={20} disabled aria-label="一覧"><Icon name="grid" size={13} /></ToolButton>
                  </SideTools>
                  <SiteTable />
                </SidePanel>
              </Sidebar>
              <Grip />
              <Main>
                <Upper>
                  <Options>
                    <MetalButton><Icon name="swirl" />情報更新</MetalButton>
                    <Group>
                      <CheckLabel><Check type="checkbox" defaultChecked />PC順位</CheckLabel>
                      <CheckLabel><Check type="checkbox" />スマホ順位</CheckLabel>
                    </Group>
                    <Group>
                      <CheckLabel $color="#1010c8"><Check type="checkbox" defaultChecked />Google</CheckLabel>
                      <CheckLabel $color="#f8103c"><Check type="checkbox" />Yahoo</CheckLabel>
                    </Group>
                    <CheckLabel $gap={11}><Check type="checkbox" />ログにランク内訳など詳細も表示</CheckLabel>
                    <Field $gap={9}>
                      Google制限時動作
                      <Combo $width={99} $height={18}>
                        <Select $size={8}><option>自動停止</option></Select>
                        <Down />
                      </Combo>
                    </Field>
                  </Options>
                  <ToolLine>
                    <Tools>
                      {toolGroups.map((names) => (
                        <ToolGroup key={names[0]}>
                          {names.map((n) => (
                            <ToolButton key={n} aria-label={n} disabled={n === "stamp" || n === "users"}>
                              <Icon name={n} />
                            </ToolButton>
                          ))}
                        </ToolGroup>
                      ))}
                      <ToolText>表示方式</ToolText>
                      <ToolGroup>
                        {views.map((n) => (
                          <ToolButton key={n} $width={20} $active={n === view} aria-label={n} onClick={() => setView(n)}>
                            <Icon name={n} />
                          </ToolButton>
                        ))}
                      </ToolGroup>
                      <ToolGroup>
                        <ToolButton aria-label="並べ替え"><Icon name="sort" /></ToolButton>
                      </ToolGroup>
                    </Tools>
                    <Field $right={9}>
                      <Icon name="clock" />
                      自動実行
                      <Combo $width={60} $height={20}>
                        <Select $weight={700}><option>なし</option></Select>
                        <Down />
                      </Combo>
                    </Field>
                  </ToolLine>
                  <RankTable />
                </Upper>
                <Splitter />
                <Lower>
                  <Tabs $indent={2} $gap={2} $height={17}>
                    <TabSlot>
                      <Tab $width={84} $active><Icon name="chart" />ヒストリー</Tab>
                      <Mark $width={3} $inset="-8px -4px -6px 2px" />
                    </TabSlot>
                    <Tab $width={144}><Icon name="info" size={13} />インフォメーション/ログ</Tab>
                    <Tab $width={64}><Icon name="memo" />MEMO</Tab>
                  </Tabs>
                  <LowerPanel>
                    <History>
                      <Dates>
                        <DatePick value="2025/07/14" label="開始日" />
                        <Tilde>～</Tilde>
                        <DatePick value="2025/09/06" label="終了日" />
                        <RefreshSlot>
                          <MetalButton $height={20} $pad={12}><Icon name="refresh" />更新</MetalButton>
                        </RefreshSlot>
                      </Dates>
                      <RankChart />
                    </History>
                    <Grip />
                    <Results>
                      <ResultTools>
                        <ToolText>表示方式</ToolText>
                        <ToolGroup>
                          {views.map((n) => (
                            <ToolButton key={n} $height={20} $active={n === resultView} aria-label={n} onClick={() => setResultView(n)}>
                              <Icon name={n} />
                            </ToolButton>
                          ))}
                        </ToolGroup>
                      </ResultTools>
                      <ResultTable />
                    </Results>
                    <Mark $width={2} $inset="6px 2px 1px 0" />
                  </LowerPanel>
                  <Arrow viewBox="0 0 60 64">
                    <path d="M53 1L17 36 11 30 1 61 32 47 26 43C36 33 46 18 55 2z" fill="#ff2a1a" />
                  </Arrow>
                </Lower>
              </Main>
            </Columns>
          </Inner>
        </Frame>
      </Window>
    </>
  );
};

export default App;
